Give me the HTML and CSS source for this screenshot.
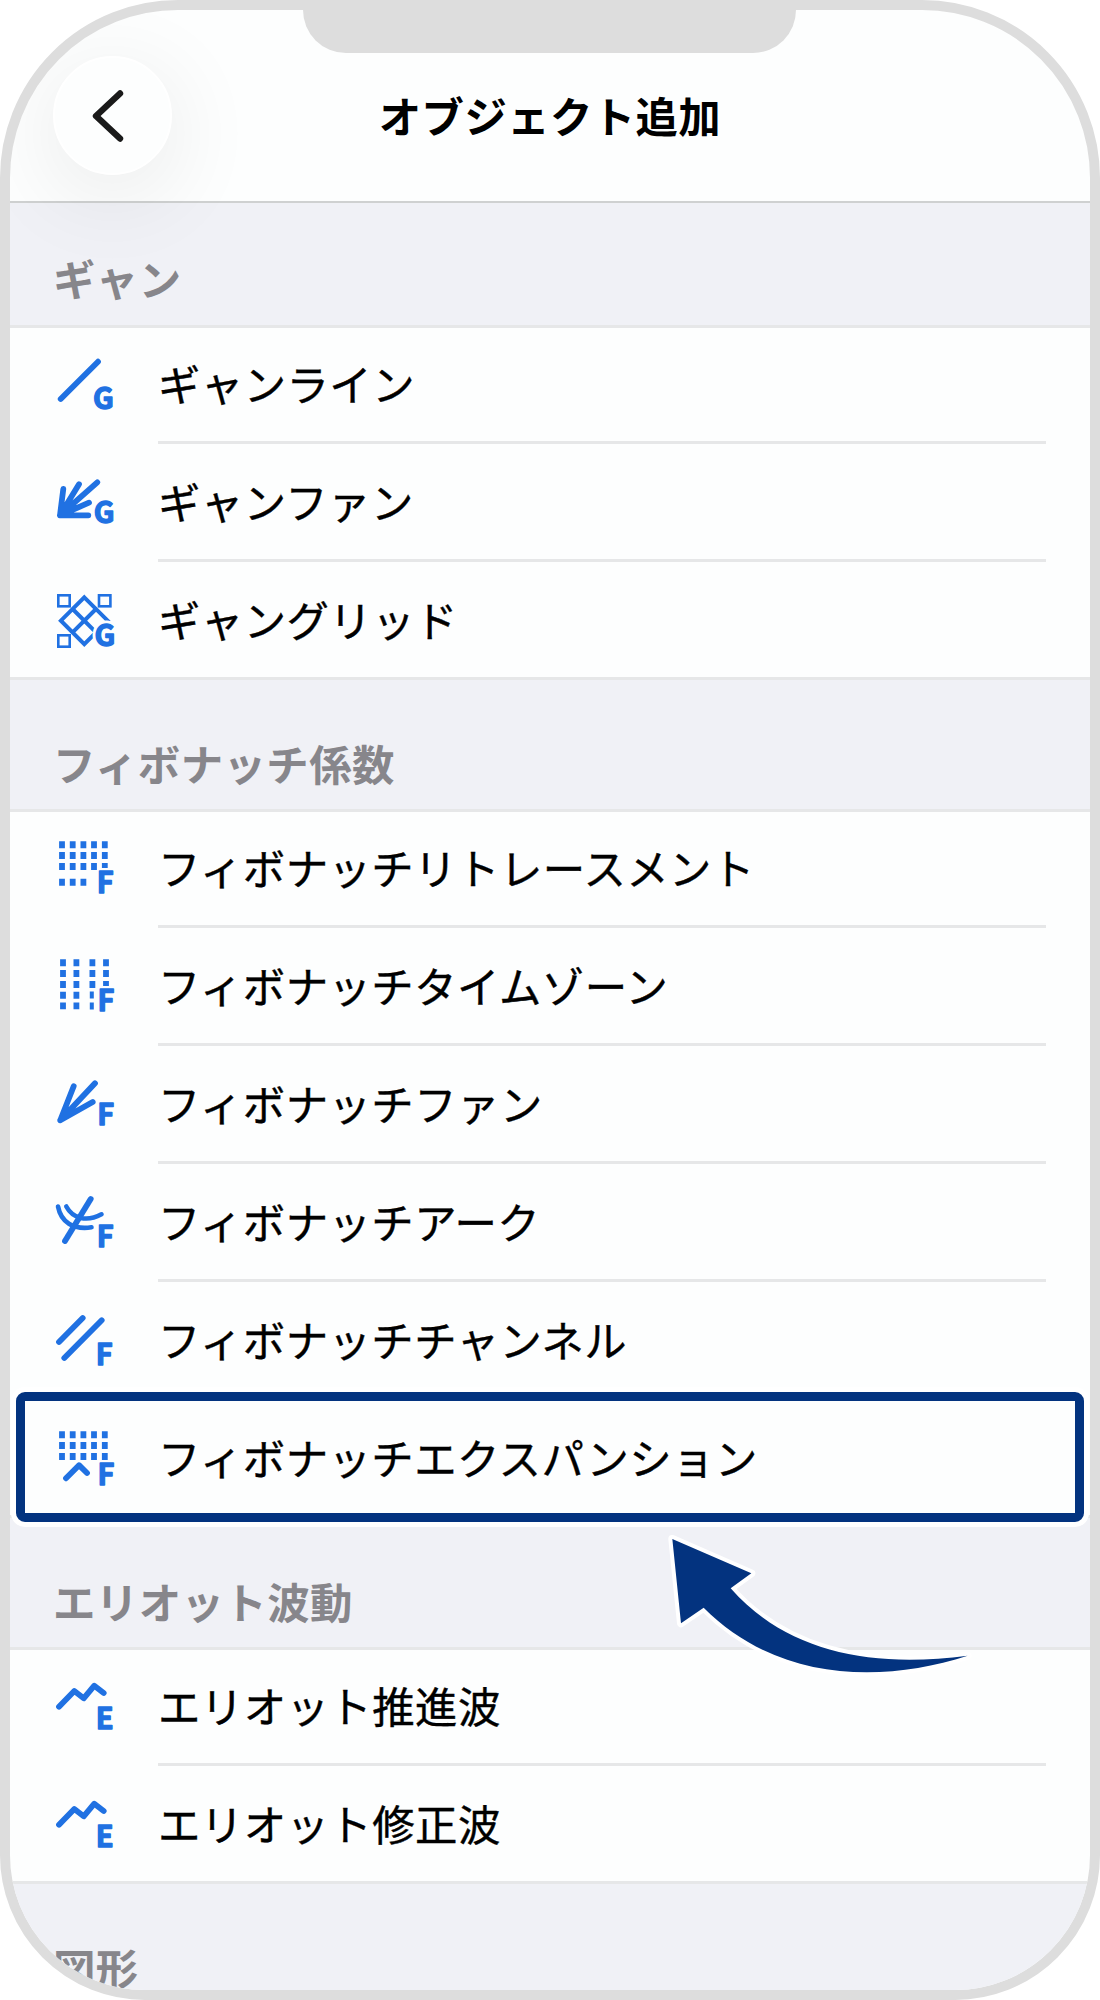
FILE: index.html
```html
<!DOCTYPE html>
<html lang="ja">
<head>
    <meta charset="UTF-8">
    <meta name="viewport" content="width=device-width, initial-scale=1.0">
    <title>オブジェクト追加</title>
    <link rel="stylesheet" href="styles.css">
</head>
<body>
    <div class="phone">
        <div class="notch"></div>

        <header class="header">
            <button class="back" aria-label="戻る">
                <svg width="40" height="60" viewBox="0 0 40 60"><path d="M32 7.5 L8 30 L32 52.5"/></svg>
            </button>
            <h1 class="title">オブジェクト追加</h1>
        </header>

        <h2 class="section-title first">ギャン</h2>
        <ul class="list">
            <li class="row">
                <svg class="icon" viewBox="0 0 60 60">
                    <path d="M4.7 45 L42 7.7"/>
                    <text x="36.9" y="54.7">G</text>
                </svg>
                <span class="label">ギャンライン</span>
            </li>
            <li class="row">
                <svg class="icon" viewBox="0 0 60 60">
                    <path d="M7.3 17 L4 43.3 L23 12.3 M4 43.3 L41.3 10.3 M4 43.3 L33 30.7 M4 43.3 H32.3"/>
                    <text x="37.7" y="51.2">G</text>
                </svg>
                <span class="label">ギャンファン</span>
            </li>
            <li class="row">
                <svg class="icon" viewBox="0 0 60 60">
                    <g class="boxes">
                        <rect x="2.3" y="5.3" width="11.4" height="11"/>
                        <rect x="43" y="5.3" width="11.4" height="11"/>
                        <rect x="2.3" y="45.3" width="11.4" height="11.4"/>
                    </g>
                    <path class="thin" d="M28.3 7.3 L51.7 30.7 L28.3 54.1 L4.9 30.7 Z M16.6 19 L40 42.4 M40 19 L16.6 42.4"/>
                    <text class="halo" x="38.5" y="56.2">G</text>
                    <text x="38.5" y="56.2">G</text>
                </svg>
                <span class="label">ギャングリッド</span>
            </li>
        </ul>

        <h2 class="section-title">フィボナッチ係数</h2>
        <ul class="list">
            <li class="row">
                <svg class="icon" viewBox="0 0 60 60">
                    <g class="dots">
                        <path d="M6 3.3 v29 M6 40.7 v7"/>
                        <path d="M16.7 3.3 v29 M16.7 40.7 v7"/>
                        <path d="M27.4 3.3 v29 M27.4 40.7 v7"/>
                        <path d="M38 3.3 v29"/>
                        <path d="M48.8 3.3 v26.6"/>
                    </g>
                    <text x="40.8" y="55.2">F</text>
                </svg>
                <span class="label">フィボナッチリトレースメント</span>
            </li>
            <li class="row">
                <svg class="icon" viewBox="0 0 60 60">
                    <g class="dots">
                        <path d="M7 3.3 v50"/>
                        <path d="M20.4 3.3 v50"/>
                        <path d="M36.4 3.3 v29"/>
                        <path class="narrow" d="M35.8 35.6 v18"/>
                        <path d="M50 3.3 v26.6"/>
                    </g>
                    <text x="41.5" y="55.2">F</text>
                </svg>
                <span class="label">フィボナッチタイムゾーン</span>
            </li>
            <li class="row">
                <svg class="icon" viewBox="0 0 60 60">
                    <path d="M17.7 12.3 L4.3 46.3 L39 9.3 M4.3 46.3 L36.7 28"/>
                    <text x="41.2" y="50.5">F</text>
                </svg>
                <span class="label">フィボナッチファン</span>
            </li>
            <li class="row">
                <svg class="icon" viewBox="0 0 60 60">
                    <path d="M9 49 L34.7 7"/>
                    <path class="arc" d="M2 14.5 C5 30 17 38 35.5 35.3"/>
                    <path class="arc" d="M10.3 14.5 C17 27 31 30 45.5 22.3"/>
                    <text x="40.8" y="55.2">F</text>
                </svg>
                <span class="label">フィボナッチアーク</span>
            </li>
            <li class="row">
                <svg class="icon" viewBox="0 0 60 60">
                    <path d="M3 32 L26.7 8 M8.3 48 L45.7 10.3"/>
                    <text x="39.8" y="55.2">F</text>
                </svg>
                <span class="label">フィボナッチチャンネル</span>
            </li>
            <li class="row selected">
                <svg class="icon" viewBox="0 0 60 60">
                    <g class="dots">
                        <path d="M6 3.3 v29"/>
                        <path d="M16.7 3.3 v29"/>
                        <path d="M27.4 3.3 v29"/>
                        <path d="M38 3.3 v29"/>
                        <path d="M48.8 3.3 v29"/>
                    </g>
                    <path d="M10 50.3 L23 37.2 L31 45"/>
                    <text x="41.5" y="57.3">F</text>
                </svg>
                <span class="label">フィボナッチエクスパンション</span>
            </li>
        </ul>

        <h2 class="section-title">エリオット波動</h2>
        <ul class="list">
            <li class="row">
                <svg class="icon" viewBox="0 0 60 60">
                    <path d="M3 30.7 L18.3 15 L27.7 22.3 L38.3 9.7 L47.7 17"/>
                    <text x="39.8" y="52.8">E</text>
                </svg>
                <span class="label">エリオット推進波</span>
            </li>
            <li class="row">
                <svg class="icon" viewBox="0 0 60 60">
                    <path d="M3 30.7 L18.3 15 L27.7 22.3 L38.3 9.7 L47.7 17"/>
                    <text x="39.8" y="52.8">E</text>
                </svg>
                <span class="label">エリオット修正波</span>
            </li>
        </ul>

        <h2 class="section-title">図形</h2>

        <!-- pointer to the selected row -->
        <svg class="arrow" viewBox="60 450 960 450">
            <path d="M97 477 L334 580 L272 625 C440 815 690 866 983 827 C720 912 410 903 191 683 L123 730 Z"/>
        </svg>
    </div>
</body>
</html>
```
FILE: styles.css
```css
* {
    box-sizing: border-box;
}

body {
    margin: 0;
    background: #fff;
    color: #000;
    font-family: "Noto Sans CJK JP", sans-serif;
    font-size: 42.4px;
}

.phone {
    position: relative;
    width: 1100px;
    height: 2000px;
    border: 10px solid #ddd;
    border-radius: 178px 178px 145px 145px;
    background: #fdfefe;
    overflow: hidden;
}

.notch {
    position: absolute;
    z-index: 3;
    top: 0;
    left: 293px;
    width: 493px;
    height: 43px;
    border-radius: 0 0 43px 43px;
    background: #ddd;
}

.header {
    position: relative;
    z-index: 2;
    display: grid;
    grid-template-columns: 119px 1fr 119px;
    align-items: start;
    height: 193px;
    padding: 46px 43px 0;
    border-bottom: 2px solid #cfd1d1;
}

.back {
    display: flex;
    justify-content: center;
    align-items: center;
    width: 119px;
    height: 119px;
    padding: 0 9px 0 0;
    border: 2px solid #fff;
    border-radius: 50%;
    background: #fdfefe;
    box-shadow: 0 18px 95px rgba(0, 20, 0, 0.09);
}

.back svg {
    fill: none;
    stroke: #1a1a1a;
    stroke-width: 6.4;
    stroke-linecap: round;
    stroke-linejoin: round;
}

.title {
    margin: 0;
    font-size: 42.4px;
    font-weight: 700;
    line-height: 118px;
    letter-spacing: 0.4px;
    text-align: center;
}

.section-title {
    display: flex;
    align-items: flex-start;
    height: 132px;
    margin: 0;
    padding: 53px 43px 0;
    border-bottom: 3px solid #e6e7e8;
    background: #f0f1f6;
    color: #87868b;
    font-size: 42.4px;
    font-weight: 700;
    line-height: 60px;
    letter-spacing: 0.45px;
}

.section-title.first {
    height: 125px;
    padding-top: 45px;
}

.list {
    margin: 0;
    padding: 0;
    list-style: none;
}

.row {
    position: relative;
    display: flex;
    align-items: flex-end;
    height: 118px;
    padding: 0 44px 0 46px;
}

.row:first-child {
    height: 116px;
}

.row:last-child {
    border-bottom: 3px solid #e6e7e8;
}

.row:last-child .label {
    border-bottom: 0;
}

.label {
    flex: 1;
    padding-bottom: 28px;
    border-bottom: 3px solid #e6e7e8;
    line-height: 60px;
    letter-spacing: 0.45px;
    white-space: nowrap;
    -webkit-text-stroke: 0.4px #000;
}

.icon {
    flex: none;
    width: 60px;
    height: 60px;
    margin: 0 42px 30px 0;
    overflow: visible;
    fill: none;
    stroke: #2071e2;
    stroke-width: 5.8;
    stroke-linecap: round;
    stroke-linejoin: round;
}

.row:last-child .icon {
    margin-bottom: 27px;
}

.icon text {
    fill: #2071e2;
    stroke: #2071e2;
    stroke-width: 1.3;
    font-size: 29px;
    font-weight: 700;
}

.icon .halo {
    stroke: #fdfefe;
    stroke-width: 7;
}

.icon .thin {
    stroke-width: 4;
    stroke-linecap: butt;
    stroke-linejoin: miter;
}

.icon .arc {
    stroke-width: 4.6;
}

.icon .boxes {
    stroke-width: 2.6;
    stroke-linejoin: miter;
}

.icon .dots {
    stroke-linecap: butt;
    stroke-dasharray: 7 3.8;
}

.icon .narrow {
    stroke-width: 4;
}

.selected::after {
    content: "";
    position: absolute;
    inset: -8px 6px -7px;
    border: 9px solid #03337f;
    border-radius: 9px;
    box-shadow: 0 0 0 5px #fff;
}

.arrow {
    position: absolute;
    top: 1520px;
    left: 650px;
    width: 320px;
    height: 150px;
    fill: #03337f;
    stroke: #fff;
    stroke-width: 24;
    stroke-linejoin: round;
    paint-order: stroke;
}
```
